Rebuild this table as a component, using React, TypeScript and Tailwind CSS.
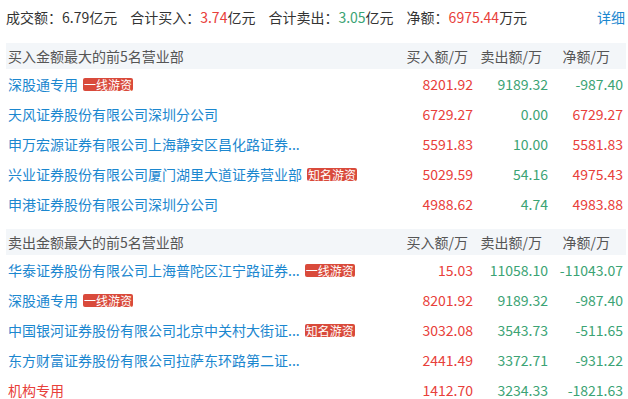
import React from "react";

type Row = { name: string; tag?: string; buy: string; sell: string; net: string; red?: boolean };

const RED = "text-[#e8403a]";
const GREEN = "text-[#3ba374]";

const buyRows: Row[] = [
  { name: "深股通专用", tag: "一线游资", buy: "8201.92", sell: "9189.32", net: "-987.40" },
  { name: "天风证券股份有限公司深圳分公司", buy: "6729.27", sell: "0.00", net: "6729.27" },
  { name: "申万宏源证券有限公司上海静安区昌化路证券...", buy: "5591.83", sell: "10.00", net: "5581.83" },
  { name: "兴业证券股份有限公司厦门湖里大道证券营业部", tag: "知名游资", buy: "5029.59", sell: "54.16", net: "4975.43" },
  { name: "申港证券股份有限公司深圳分公司", buy: "4988.62", sell: "4.74", net: "4983.88" },
];

const sellRows: Row[] = [
  { name: "华泰证券股份有限公司上海普陀区江宁路证券...", tag: "一线游资", buy: "15.03", sell: "11058.10", net: "-11043.07" },
  { name: "深股通专用", tag: "一线游资", buy: "8201.92", sell: "9189.32", net: "-987.40" },
  { name: "中国银河证券股份有限公司北京中关村大街证...", tag: "知名游资", buy: "3032.08", sell: "3543.73", net: "-511.65" },
  { name: "东方财富证券股份有限公司拉萨东环路第二证...", buy: "2441.49", sell: "3372.71", net: "-931.22" },
  { name: "机构专用", buy: "1412.70", sell: "3234.33", net: "-1821.63", red: true },
];

function Header({ title }: { title: string }) {
  return (
    <div className="flex h-[26px] items-center bg-[#f3f6f9] pl-[2px] pr-[3px] text-[14px] text-[#555555]">
      <div className="flex-1">{title}</div>
      <div className="w-[75px] pr-[5px] text-right">买入额/万</div>
      <div className="w-[75px] pr-[6px] text-right">卖出额/万</div>
      <div className="w-[75px] pr-[13px] text-right">净额/万</div>
    </div>
  );
}

function TableRow({ r }: { r: Row }) {
  const netNeg = r.net.startsWith("-");
  return (
    <div className="flex h-[30px] items-center pl-[2px] pr-[3px] text-[14px]">
      <div className="flex min-w-0 flex-1 items-center">
        <span className={`whitespace-nowrap ${r.red ? "text-[#e8403a]" : "text-[#1b87cf]"}`}>{r.name}</span>
        {r.tag && (
          <span className="ml-[5px] inline-block h-[13px] rounded-[2px] bg-[#d94a3b] px-[1px] text-[12px] leading-[13px] whitespace-nowrap text-white">
            {r.tag}
          </span>
        )}
      </div>
      <div className={`w-[75px] text-right ${RED}`}>{r.buy}</div>
      <div className={`w-[75px] text-right ${GREEN}`}>{r.sell}</div>
      <div className={`w-[75px] text-right ${netNeg ? GREEN : RED}`}>{r.net}</div>
    </div>
  );
}

export default function App() {
  return (
    <div
      className="h-[399px] w-[628px] overflow-hidden bg-white px-[6px] pr-[2px]"
      style={{ fontFamily: '"Noto Sans CJK SC", "Noto Sans", sans-serif' }}
    >
      <div className="flex h-[34px] items-center gap-[13px] text-[14px] text-[#333333]">
        <span>
          成交额：6.79亿元
        </span>
        <span>
          合计买入：<span className={RED}>3.74</span>亿元
        </span>
        <span>
          合计卖出：<span className={GREEN}>3.05</span>亿元
        </span>
        <span>
          净额：<span className={RED}>6975.44</span>万元
        </span>
        <span className="ml-auto pr-[1px] text-[#1b87cf]">详细</span>
      </div>
      <div className="mt-[9px]">
        <Header title="买入金额最大的前5名营业部" />
        {buyRows.map((r, i) => (
          <TableRow key={i} r={r} />
        ))}
      </div>
      <div className="mt-[10px]">
        <Header title="卖出金额最大的前5名营业部" />
        {sellRows.map((r, i) => (
          <TableRow key={i} r={r} />
        ))}
      </div>
    </div>
  );
}
